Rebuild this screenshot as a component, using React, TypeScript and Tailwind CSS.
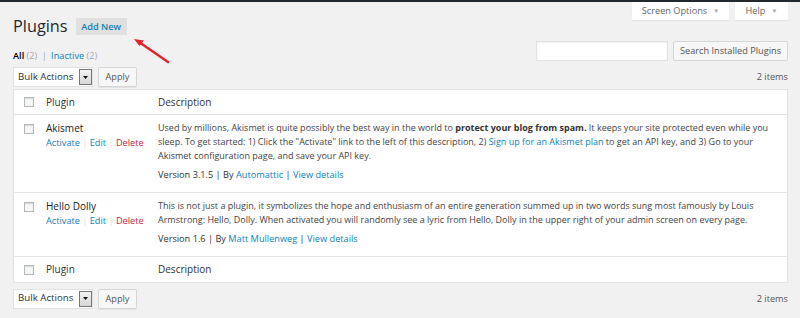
import type { ReactNode } from 'react';

const font = { fontFamily: '"Open Sans", "Liberation Sans", sans-serif' };

function Box() {
  return <span className="block w-[10px] h-[10px] border border-[#b4b9be] bg-[#f6f6f6] shadow-[inset_0_1px_1px_rgba(0,0,0,0.12)]" />;
}

function Caret() {
  return <span className="text-[6px] text-[#aaa] ml-[6px] leading-none">▼</span>;
}

function BulkActions() {
  return (
    <div className="flex items-center gap-[5px]">
      <div className="flex h-[20px] bg-white border border-[#e2e2e2]">
        <span className="flex items-center pl-[4px] w-[65px] text-[9.7px] text-[#333]">Bulk Actions</span>
        <span className="w-[13px] my-[1px] border border-[#777] bg-gradient-to-b from-[#f4f4f4] to-[#d6d6d6] flex items-center justify-center">
          <svg width="5" height="3" viewBox="0 0 5 3">
            <path d="M0 0H5L2.5 3Z" fill="#111" />
          </svg>
        </span>
      </div>
      <button className="h-[20px] w-[39px] bg-[#f7f7f7] border border-[#d6d6d6] rounded-[2px] text-[9.2px] text-[#555] shadow-[0_1px_0_rgba(0,0,0,0.06)]">
        Apply
      </button>
    </div>
  );
}

function Actions() {
  return (
    <p className="text-[9.2px] leading-[14px] text-[#0f7fb8]">
      Activate <span className="text-[#ddd]">|</span> Edit <span className="text-[#ddd]">|</span>{' '}
      <span className="text-[#c3283a]">Delete</span>
    </p>
  );
}

function Row({ name, children, version, author }: { name: string; children: ReactNode; version: string; author: string }) {
  return (
    <div className="grid grid-cols-[32px_112px_1fr] pt-[6px] pb-[10px] border-b border-[#e5e5e5]">
      <div className="pl-[10px] pt-[3px]">
        <Box />
      </div>
      <div className="-mt-[1px]">
        <p className="text-[10px] leading-[16px] text-[#222]">{name}</p>
        <Actions />
      </div>
      <div className="text-[9px] leading-[14px] text-[#444] whitespace-nowrap">
        {children}
        <p className="mt-[5px] text-[9.2px] text-[#333]">
          Version {version} | By <span className="text-[#0f7fb8]">{author}</span> |{' '}
          <span className="text-[#0f7fb8]">View details</span>
        </p>
      </div>
    </div>
  );
}

function HeadRow({ border }: { border: string }) {
  return (
    <div className={`grid grid-cols-[32px_112px_1fr] items-center h-[25px] ${border} border-[#e1e1e1] text-[10px] text-[#333]`}>
      <div className="pl-[10px]">
        <Box />
      </div>
      <span>Plugin</span>
      <span>Description</span>
    </div>
  );
}

export default function App() {
  return (
    <div className="relative w-[800px] h-[318px] overflow-hidden bg-[#f1f1f1]" style={font}>
      <div className="h-[2px] bg-[#23282d]" />

      <div className="flex justify-end gap-[6px] pr-[12px] h-[18px]">
        <div className="w-[97px] bg-white flex items-center justify-center text-[9.2px] text-[#666] shadow-[0_1px_1px_rgba(0,0,0,0.05)]">
          Screen Options
          <Caret />
        </div>
        <div className="w-[53px] bg-white flex items-center justify-center text-[9.2px] text-[#666] shadow-[0_1px_1px_rgba(0,0,0,0.05)]">
          Help
          <Caret />
        </div>
      </div>

      <div className="flex items-center -mt-[2px] h-[17px] pl-[13px]">
        <h1 className="text-[16.3px] leading-[17px] text-[#23282d]">Plugins</h1>
        <span className="ml-[8px] w-[51px] h-[17px] bg-[#e0e0e0] flex items-center justify-center text-[9.2px] font-semibold text-[#0f7fb8]">
          Add New
        </span>
      </div>

      <div className="flex justify-between items-end mt-[6px] h-[20px] pl-[13px] pr-[12px]">
        <p className="text-[9.2px] leading-[14px] -mb-[2px] text-[#aaa]">
          <span className="font-semibold text-[#000]">All</span> (2) <span className="mx-[2px]">|</span>{' '}
          <span className="text-[#0f7fb8]">Inactive</span> (2)
        </p>
        <div className="flex gap-[5px] h-[20px]">
          <div className="w-[132px] bg-white border border-[#e2e2e2] shadow-[inset_0_1px_2px_rgba(0,0,0,0.07)]" />
          <button className="w-[115px] bg-[#f7f7f7] border border-[#d6d6d6] rounded-[2px] text-[9.2px] text-[#555]">
            Search Installed Plugins
          </button>
        </div>
      </div>

      <div className="flex justify-between items-center mt-[6px] h-[20px] pl-[13px] pr-[12px]">
        <BulkActions />
        <span className="text-[9.2px] text-[#555]">2 items</span>
      </div>

      <div className="mt-[2px] ml-[13px] mr-[12px] bg-white border border-[#e1e1e1]">
        <HeadRow border="border-b" />
        <Row name="Akismet" version="3.1.5" author="Automattic">
          <p>
            Used by millions, Akismet is quite possibly the best way in the world to{' '}
            <strong className="font-bold text-[#333]">protect your blog from spam.</strong> It keeps your site protected even while you
          </p>
          <p>
            sleep. To get started: 1) Click the "Activate" link to the left of this description, 2){' '}
            <span className="text-[#0f7fb8]">Sign up for an Akismet plan</span> to get an API key, and 3) Go to your
          </p>
          <p>Akismet configuration page, and save your API key.</p>
        </Row>
        <Row name="Hello Dolly" version="1.6" author="Matt Mullenweg">
          <p>
            This is not just a plugin, it symbolizes the hope and enthusiasm of an entire generation summed up in two words sung most famously by Louis
          </p>
          <p>Armstrong: Hello, Dolly. When activated you will randomly see a lyric from Hello, Dolly in the upper right of your admin screen on every page.</p>
        </Row>
        <HeadRow border="" />
      </div>

      <div className="flex justify-between items-center mt-[5px] h-[21px] pl-[13px] pr-[12px]">
        <BulkActions />
        <span className="text-[9.2px] text-[#555]">2 items</span>
      </div>

      <svg className="absolute left-[128px] top-[33px]" width="46" height="34" viewBox="0 0 46 34">
        <path d="M40 29L11 9" stroke="#e3222b" strokeWidth="2.4" strokeLinecap="round" />
        <path d="M6 6L16 7.5L11.5 13Z" fill="#e3222b" />
      </svg>
    </div>
  );
}
